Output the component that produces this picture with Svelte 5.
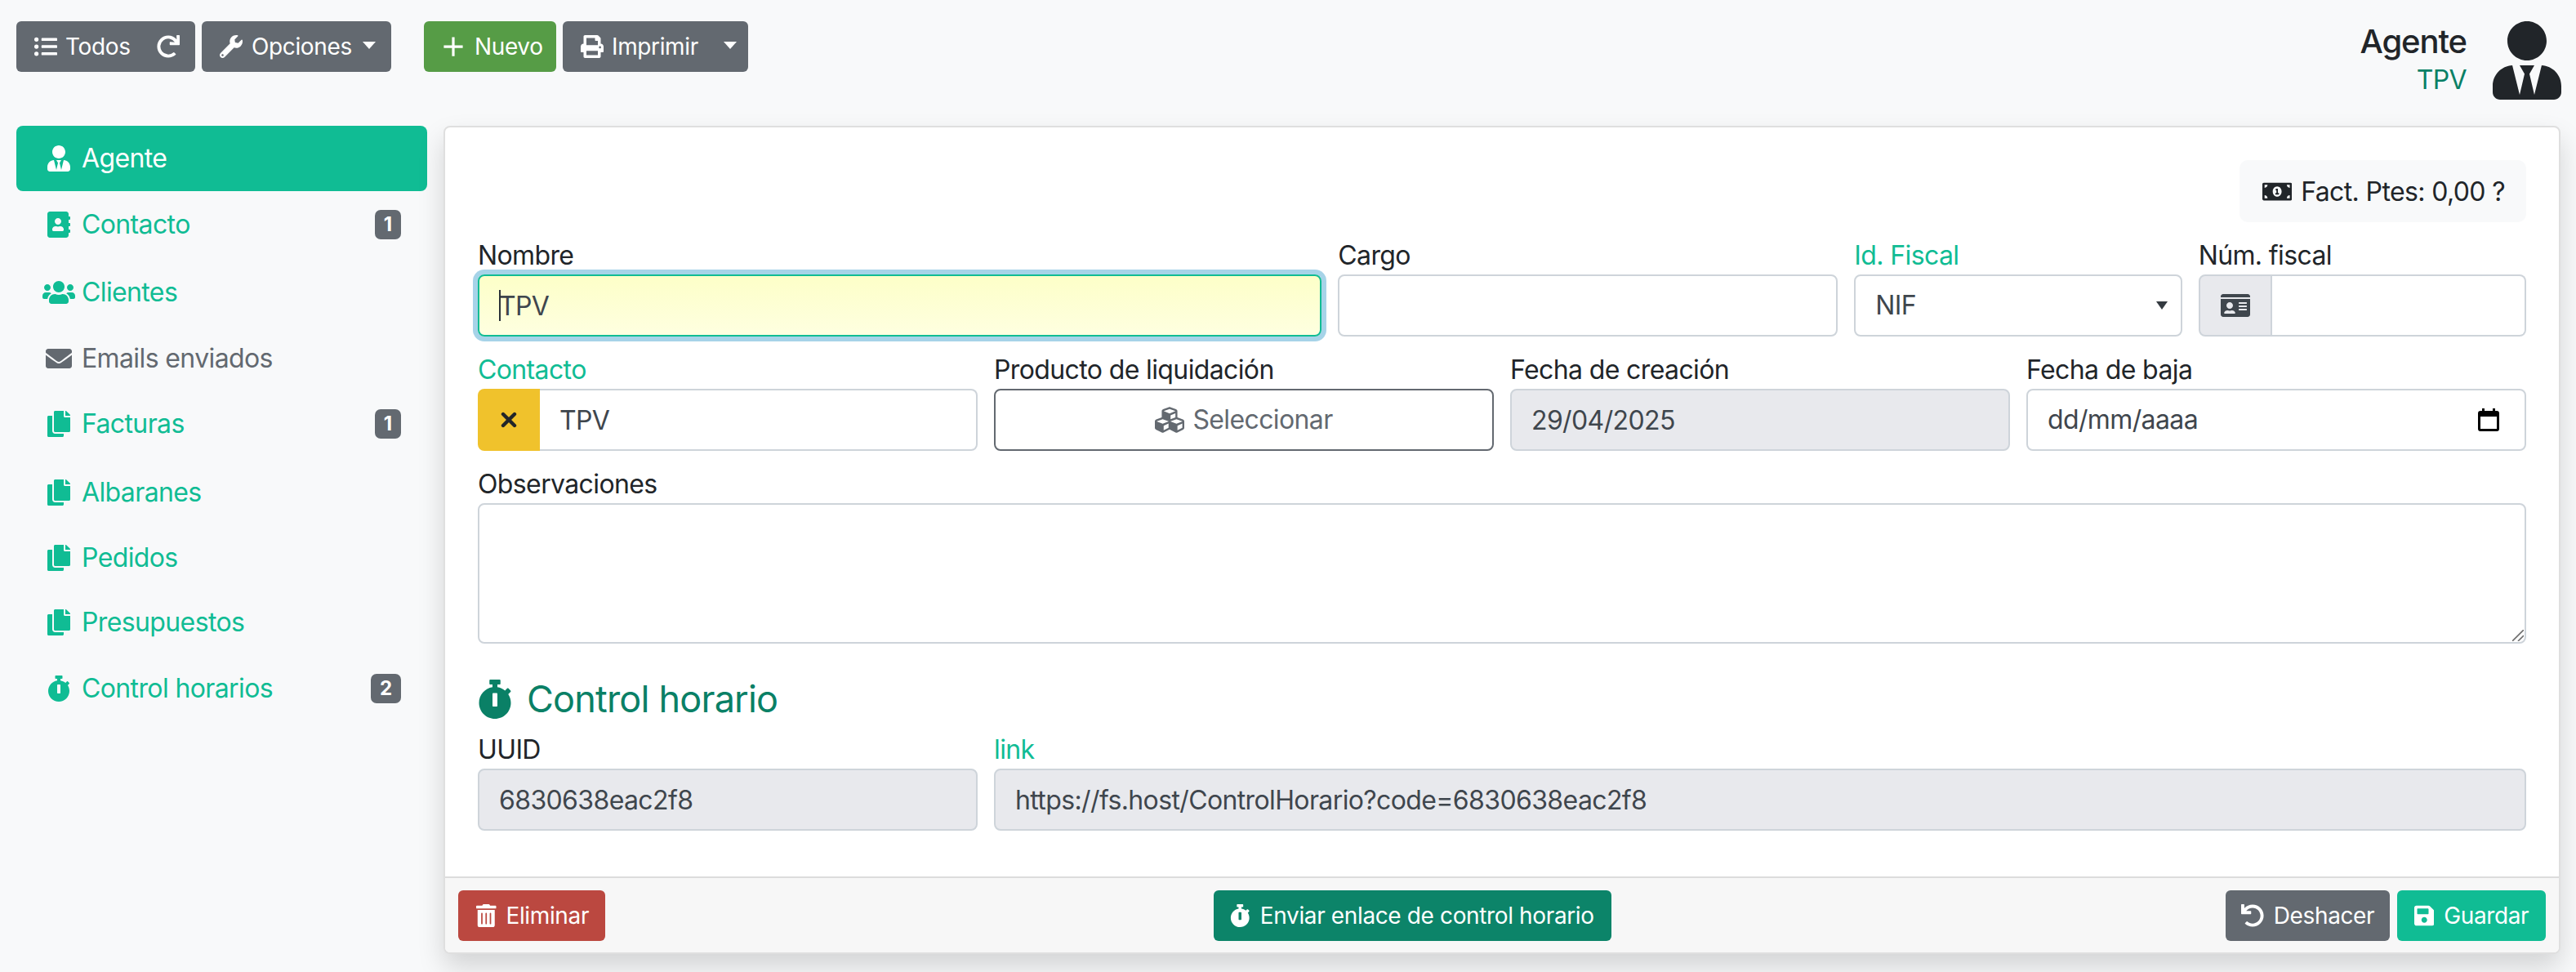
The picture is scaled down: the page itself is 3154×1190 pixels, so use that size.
<script lang="ts">
  const icons = {
    list: { vb: '0 0 512 512', d: 'M48 48a48 48 0 1 0 48 48 48 48 0 0 0-48-48zm0 160a48 48 0 1 0 48 48 48 48 0 0 0-48-48zm0 160a48 48 0 1 0 48 48 48 48 0 0 0-48-48zm448 16H176a16 16 0 0 0-16 16v32a16 16 0 0 0 16 16h320a16 16 0 0 0 16-16v-32a16 16 0 0 0-16-16zm0-320H176a16 16 0 0 0-16 16v32a16 16 0 0 0 16 16h320a16 16 0 0 0 16-16V80a16 16 0 0 0-16-16zm0 160H176a16 16 0 0 0-16 16v32a16 16 0 0 0 16 16h320a16 16 0 0 0 16-16v-32a16 16 0 0 0-16-16z' },
    redo: { vb: '0 0 512 512', d: 'M500.33 0h-47.41a12 12 0 0 0-12 12.57l4 82.76A247.42 247.42 0 0 0 256 8C119.34 8 8.9 119.53 8 256.19 7.1 393.07 118.1 504 256 504a247.1 247.1 0 0 0 166.18-63.91 12 12 0 0 0 .48-17.43l-34-34a12 12 0 0 0-16.38-.55A176 176 0 1 1 402.1 157.8l-101.53-4.87a12 12 0 0 0-12.57 12v47.41a12 12 0 0 0 12 12h200.33a12 12 0 0 0 12-12V12a12 12 0 0 0-12-12z' },
    undo: { vb: '0 0 512 512', d: 'M212.333 224.333H12c-6.627 0-12-5.373-12-12V12C0 5.373 5.373 0 12 0h48c6.627 0 12 5.373 12 12v78.112C117.773 39.279 184.26 7.47 258.175 8.007c136.906.994 246.448 111.623 246.157 248.532C504.041 393.258 393.12 504 256.333 504c-64.089 0-122.496-24.313-166.51-64.215-5.099-4.622-5.334-12.554-.467-17.42l33.967-33.967c4.474-4.474 11.662-4.717 16.401-.525C170.76 415.336 211.58 432 256.333 432c97.268 0 176-78.716 176-176 0-97.267-78.716-176-176-176-58.496 0-110.28 28.476-142.274 72.333h98.274c6.627 0 12 5.373 12 12v48c0 6.627-5.373 12-12 12z' },
    wrench: { vb: '0 0 512 512', d: 'M507.73 109.1c-2.24-9.03-13.54-12.09-20.12-5.51l-74.36 74.36-67.88-11.31-11.31-67.88 74.36-74.36c6.62-6.62 3.43-17.9-5.66-20.16-47.38-11.74-99.55.91-136.58 37.93-39.64 39.64-50.55 97.1-34.05 147.2L18.74 402.76c-24.99 24.99-24.99 65.51 0 90.5 24.99 24.99 65.51 24.99 90.5 0l213.21-213.21c50.12 16.71 107.47 5.68 147.37-34.22 37.07-37.07 49.7-89.32 37.91-136.73zM64 472c-13.25 0-24-10.75-24-24 0-13.26 10.75-24 24-24s24 10.74 24 24c0 13.25-10.75 24-24 24z' },
    plus: { vb: '0 0 24 28', d: 'M10.4 2.5h3.2v10h10v3.2h-10v10h-3.2v-10h-10v-3.2h10z' },
    print: { vb: '0 0 512 512', d: 'M448 192V77.25c0-8.49-3.37-16.62-9.37-22.63L393.37 9.37c-6-6-14.14-9.37-22.63-9.37H96C78.33 0 64 14.33 64 32v160c-35.35 0-64 28.65-64 64v112c0 8.84 7.16 16 16 16h48v96c0 17.67 14.33 32 32 32h320c17.67 0 32-14.33 32-32v-96h48c8.84 0 16-7.16 16-16V256c0-35.35-28.65-64-64-64zm-64 256H128v-96h256v96zm0-224H128V64h192v48c0 8.84 7.16 16 16 16h48v96zm48 72c-13.25 0-24-10.75-24-24 0-13.27 10.75-24 24-24s24 10.73 24 24c0 13.25-10.75 24-24 24z' },
    userTie: { vb: '0 0 448 512', d: 'M224 256c70.7 0 128-57.3 128-128S294.7 0 224 0 96 57.3 96 128s57.3 128 128 128zm95.8 32.6L272 480l-32-136 32-56h-96l32 56-32 136-47.8-191.4C56.9 292 0 350.3 0 422.4V464c0 26.5 21.5 48 48 48h352c26.5 0 48-21.5 48-48v-41.6c0-72.1-56.9-130.4-128.2-133.8z' },
    book: { vb: '0 0 448 512', d: 'M436 160c6.6 0 12-5.4 12-12v-40c0-6.6-5.4-12-12-12h-20V48c0-26.5-21.5-48-48-48H48C21.5 0 0 21.5 0 48v416c0 26.5 21.5 48 48 48h320c26.5 0 48-21.5 48-48v-48h20c6.6 0 12-5.4 12-12v-40c0-6.6-5.4-12-12-12h-20v-64h20c6.6 0 12-5.4 12-12v-40c0-6.6-5.4-12-12-12h-20v-64h20zm-228-32c35.3 0 64 28.7 64 64s-28.7 64-64 64-64-28.7-64-64 28.7-64 64-64zm112 236.8c0 10.6-10 19.2-22.4 19.2H118.4C106 384 96 375.4 96 364.8v-19.2c0-31.8 30.1-57.6 67.2-57.6h5c12.3 5.1 25.7 8 39.8 8s27.6-2.9 39.8-8h5c37.1 0 67.2 25.8 67.2 57.6v19.2z' },
    users: { vb: '0 0 640 512', d: 'M96 224c35.3 0 64-28.7 64-64s-28.7-64-64-64-64 28.7-64 64 28.7 64 64 64zm448 0c35.3 0 64-28.7 64-64s-28.7-64-64-64-64 28.7-64 64 28.7 64 64 64zm32 32h-64c-17.6 0-33.5 7.1-45.1 18.6 40.3 22.1 68.9 62 75.1 109.4h66c17.7 0 32-14.3 32-32v-32c0-35.3-28.7-64-64-64zm-256 0c61.9 0 112-50.1 112-112S381.9 32 320 32 208 82.1 208 144s50.1 112 112 112zm76.8 32h-8.3c-20.8 10-43.9 16-68.5 16s-47.6-6-68.5-16h-8.3C179.6 288 128 339.6 128 403.2V432c0 26.5 21.5 48 48 48h288c26.5 0 48-21.5 48-48v-28.8c0-63.6-51.6-115.2-115.2-115.2zm-223.7-13.4C161.5 263.1 145.6 256 128 256H64c-35.3 0-64 28.7-64 64v32c0 17.7 14.3 32 32 32h65.9c6.3-47.4 34.9-87.3 75.2-109.4z' },
    envelope: { vb: '0 0 512 512', d: 'M502.3 190.8c3.9-3.1 9.7-.2 9.7 4.7V400c0 26.5-21.5 48-48 48H48c-26.5 0-48-21.5-48-48V195.6c0-5 5.7-7.8 9.7-4.7 22.4 17.4 52.1 39.5 154.1 113.6 21.1 15.4 56.7 47.8 92.2 47.6 35.7.3 72-32.8 92.3-47.6 102-74.1 131.6-96.3 154-113.7zM256 320c23.2.4 56.6-29.2 73.4-41.4 132.7-96.3 142.8-104.7 173.4-128.7 5.8-4.5 9.2-11.5 9.2-18.9v-19c0-26.5-21.5-48-48-48H48C21.5 64 0 85.5 0 112v19c0 7.4 3.4 14.3 9.2 18.9 30.6 23.9 40.7 32.4 173.4 128.7 16.8 12.2 50.2 41.8 73.4 41.4z' },
    copy: { vb: '0 0 448 512', d: 'M320 448v40c0 13.255-10.745 24-24 24H24c-13.255 0-24-10.745-24-24V120c0-13.255 10.745-24 24-24h72v296c0 30.879 25.121 56 56 56h168zm0-344V0H152c-13.255 0-24 10.745-24 24v368c0 13.255 10.745 24 24 24h272c13.255 0 24-10.745 24-24V128H344c-13.2 0-24-10.8-24-24zm120.971-31.029L375.029 7.029A24 24 0 0 0 358.059 0H352v96h96v-6.059a24 24 0 0 0-7.029-16.97z' },
    stopwatch: { vb: '0 0 448 512', d: 'M432 304c0 114.9-93.1 208-208 208S16 418.9 16 304c0-104 76.3-190.2 176-205.5V64h-28c-6.6 0-12-5.4-12-12V12c0-6.6 5.4-12 12-12h120c6.6 0 12 5.4 12 12v40c0 6.6-5.4 12-12 12h-28v34.5c37.5 5.8 71.7 21.6 99.7 44.6l27.5-27.5c4.7-4.7 12.3-4.7 17 0l28.3 28.3c4.7 4.7 4.7 12.3 0 17l-29.4 29.4-.6.6C419.7 223.3 432 262.2 432 304zm-176 36V188.5c0-6.6-5.4-12-12-12h-40c-6.6 0-12 5.4-12 12V340c0 6.6 5.4 12 12 12h40c6.6 0 12-5.4 12-12z' },
    money: { vb: '0 0 640 512', d: 'M352 288h-16v-88c0-4.42-3.58-8-8-8h-13.58c-4.74 0-9.37 1.4-13.31 4.03l-15.33 10.22a7.994 7.994 0 0 0-2.22 11.09l8.88 13.31a7.994 7.994 0 0 0 11.09 2.22l.47-.31V288h-16c-4.42 0-8 3.58-8 8v16c0 4.42 3.58 8 8 8h64c4.42 0 8-3.58 8-8v-16c0-4.42-3.58-8-8-8zM608 64H32C14.33 64 0 78.33 0 96v320c0 17.67 14.33 32 32 32h576c17.67 0 32-14.33 32-32V96c0-17.67-14.33-32-32-32zM48 400v-64c35.35 0 64 28.65 64 64H48zm0-224v-64h64c0 35.35-28.65 64-64 64zm272 192c-53.02 0-96-50.14-96-112 0-61.85 42.98-112 96-112s96 50.15 96 112c0 61.88-43 112-96 112zm272 32h-64c0-35.35 28.65-64 64-64v64zm0-224c-35.35 0-64-28.65-64-64h64v64z' },
    idCard: { vb: '0 0 576 512', d: 'M528 32H48C21.5 32 0 53.5 0 80v16h576V80c0-26.5-21.5-48-48-48zM0 432c0 26.5 21.5 48 48 48h480c26.5 0 48-21.5 48-48V128H0v304zm352-232c0-4.4 3.6-8 8-8h144c4.4 0 8 3.6 8 8v16c0 4.4-3.6 8-8 8H360c-4.4 0-8-3.6-8-8v-16zm0 64c0-4.4 3.6-8 8-8h144c4.4 0 8 3.6 8 8v16c0 4.4-3.6 8-8 8H360c-4.4 0-8-3.6-8-8v-16zm0 64c0-4.4 3.6-8 8-8h144c4.4 0 8 3.6 8 8v16c0 4.4-3.6 8-8 8H360c-4.4 0-8-3.6-8-8v-16zM176 192c35.3 0 64 28.7 64 64s-28.7 64-64 64-64-28.7-64-64 28.7-64 64-64zM67.1 396.2C75.5 370.5 99.6 352 128 352h8.2c12.3 5.1 25.7 8 39.8 8s27.6-2.9 39.8-8h8.2c28.4 0 52.5 18.5 60.9 44.2 3.2 9.9-5.2 19.8-15.6 19.8H82.7c-10.4 0-18.8-10-15.6-19.8z' },
    cubes: { vb: '0 0 512 512', d: 'M488.6 250.2L392 214V105.5c0-15-9.3-28.4-23.4-33.7l-100-37.5c-8.1-3.1-17.1-3.1-25.3 0l-100 37.5c-14.1 5.3-23.4 18.7-23.4 33.7V214l-96.6 36.2C9.3 255.5 0 268.9 0 283.9V394c0 13.6 7.7 26.1 19.9 32.2l100 50c10.1 5.1 22.1 5.1 32.2 0l103.9-52 103.9 52c10.1 5.1 22.1 5.1 32.2 0l100-50c12.2-6.1 19.9-18.6 19.9-32.2V283.9c0-15-9.3-28.4-23.4-33.7zM358 214.8l-85 31.9v-68.2l85-37v73.3zM154 104.1l102-38.2 102 38.2v.6l-102 41.4-102-41.4v-.6zm84 291.1l-85 42.5v-79.1l85-38.8v75.4zm0-112l-102 41.4-102-41.4v-.6l102-38.2 102 38.2v.6zm240 112l-85 42.5v-79.1l85-38.8v75.4zm0-112l-102 41.4-102-41.4v-.6l102-38.2 102 38.2v.6z' },
    trash: { vb: '0 0 448 512', d: 'M32 464a48 48 0 0 0 48 48h288a48 48 0 0 0 48-48V128H32zm272-256a16 16 0 0 1 32 0v224a16 16 0 0 1-32 0zm-96 0a16 16 0 0 1 32 0v224a16 16 0 0 1-32 0zm-96 0a16 16 0 0 1 32 0v224a16 16 0 0 1-32 0zM432 32H312l-9.4-18.7A24 24 0 0 0 281.1 0H166.8a23.72 23.72 0 0 0-21.4 13.3L136 32H16A16 16 0 0 0 0 48v32a16 16 0 0 0 16 16h416a16 16 0 0 0 16-16V48a16 16 0 0 0-16-16z' },
    save: { vb: '0 0 448 512', d: 'M433.941 129.941l-83.882-83.882A48 48 0 0 0 316.118 32H48C21.49 32 0 53.49 0 80v352c0 26.51 21.49 48 48 48h352c26.51 0 48-21.49 48-48V163.882a48 48 0 0 0-14.059-33.941zM224 416c-35.346 0-64-28.654-64-64 0-35.346 28.654-64 64-64s64 28.654 64 64c0 35.346-28.654 64-64 64zm96-304.52V212c0 6.627-5.373 12-12 12H76c-6.627 0-12-5.373-12-12V108c0-6.627 5.373-12 12-12h228.52c3.183 0 6.235 1.264 8.485 3.515l3.48 3.48A11.996 11.996 0 0 1 320 111.48z' }
  }

  const menu = [
    { label: 'Agente', icon: icons.userTie, active: true, h: 80 },
    { label: 'Contacto', icon: icons.book, badge: 1, h: 82 },
    { label: 'Clientes', icon: icons.users, h: 84 },
    { label: 'Emails enviados', icon: icons.envelope, muted: true, h: 78 },
    { label: 'Facturas', icon: icons.copy, badge: 1, h: 82 },
    { label: 'Albaranes', icon: icons.copy, h: 86 },
    { label: 'Pedidos', icon: icons.copy, h: 74 },
    { label: 'Presupuestos', icon: icons.copy, h: 84 },
    { label: 'Control horarios', icon: icons.stopwatch, badge: 2, h: 78 }
  ]
</script>

{#snippet icon(i, cls = '')}
  <svg class="ico {cls}" viewBox={i.vb} aria-hidden="true"><path fill="currentColor" d={i.d} /></svg>
{/snippet}

<div class="page">
  <header class="topbar">
    <div class="tools">
      <div class="btn gray todos">
        {@render icon(icons.list)}
        <span>Todos</span>
        <span class="spacer"></span>
        {@render icon(icons.redo)}
      </div>
      <div class="btn gray opciones">
        {@render icon(icons.wrench)}
        <span>Opciones</span>
        <i class="caret"></i>
      </div>
      <div class="btn green nuevo">
        {@render icon(icons.plus)}
        <span>Nuevo</span>
      </div>
      <div class="btn gray imprimir">
        {@render icon(icons.print)}
        <span>Imprimir</span>
        <i class="caret"></i>
      </div>
    </div>
    <div class="title">
      <div class="title-text">
        <div class="title-main">Agente</div>
        <div class="title-sub">TPV</div>
      </div>
      {@render icon(icons.userTie, 'avatar')}
    </div>
  </header>

  <div class="body">
    <nav class="side">
      {#each menu as m}
        <div class="item" class:active={m.active} class:muted={m.muted} style="height: {m.h}px">
          <span class="item-ico">{@render icon(m.icon)}</span>
          <span>{m.label}</span>
          {#if m.badge}<span class="badge">{m.badge}</span>{/if}
        </div>
      {/each}
    </nav>

    <main class="card">
      <div class="card-body">
        <div class="pending-row">
          <div class="pending">
            {@render icon(icons.money)}
            <span>Fact. Ptes: 0,00 ?</span>
          </div>
        </div>

        <div class="row">
          <div class="field c5">
            <label for="nombre">Nombre</label>
            <div class="focus-wrap">
              <input id="nombre" class="control focused" value="TPV" />
              <span class="text-caret"></span>
            </div>
          </div>
          <div class="field c3">
            <label for="cargo">Cargo</label>
            <input id="cargo" class="control" />
          </div>
          <div class="field c2">
            <span class="lab link">Id. Fiscal</span>
            <div class="control select">
              <span>NIF</span>
              <i class="caret dark"></i>
            </div>
          </div>
          <div class="field c2">
            <label for="num">Núm. fiscal</label>
            <div class="group">
              <span class="addon">{@render icon(icons.idCard)}</span>
              <input id="num" class="control joined" />
            </div>
          </div>
        </div>

        <div class="row">
          <div class="field c3">
            <span class="lab link">Contacto</span>
            <div class="group">
              <span class="addon warn">
                <svg class="times" viewBox="0 0 20 20" aria-hidden="true">
                  <path d="M3 3l14 14M17 3L3 17" fill="none" stroke="currentColor" stroke-width="4.4" stroke-linecap="round" />
                </svg>
              </span>
              <input class="control joined" value="TPV" />
            </div>
          </div>
          <div class="field c3">
            <span class="lab">Producto de liquidación</span>
            <div class="outline">
              {@render icon(icons.cubes)}
              <span>Seleccionar</span>
            </div>
          </div>
          <div class="field c3">
            <label for="alta">Fecha de creación</label>
            <input id="alta" class="control" disabled value="29/04/2025" />
          </div>
          <div class="field c3">
            <span class="lab">Fecha de baja</span>
            <div class="control date">
              <span>dd/mm/aaaa</span>
              <svg class="cal" viewBox="0 0 26 28" aria-hidden="true">
                <path fill="#000" fill-rule="evenodd" d="M5 0h3v3h10V0h3v3h2a3 3 0 0 1 3 3v19a3 3 0 0 1-3 3H3a3 3 0 0 1-3-3V6a3 3 0 0 1 3-3h2V0zM3 10v15h20V10H3z" />
              </svg>
            </div>
          </div>
        </div>

        <div class="row">
          <div class="field c12">
            <label for="obs">Observaciones</label>
            <div class="area-wrap">
              <textarea id="obs" class="control area"></textarea>
              <svg class="grip" viewBox="0 0 14 14" aria-hidden="true">
                <path d="M0 14L14 0M7 14l7-7" fill="none" stroke="#6e6e6e" stroke-width="1.6" />
              </svg>
            </div>
          </div>
        </div>

        <h4 class="section">
          {@render icon(icons.stopwatch)}
          <span>Control horario</span>
        </h4>

        <div class="row">
          <div class="field c3">
            <label for="uuid">UUID</label>
            <input id="uuid" class="control" disabled value="6830638eac2f8" />
          </div>
          <div class="field c9">
            <span class="lab link">link</span>
            <input class="control" disabled value="https://fs.host/ControlHorario?code=6830638eac2f8" />
          </div>
        </div>
      </div>

      <footer class="card-foot">
        <div class="btn red eliminar">
          {@render icon(icons.trash)}
          <span>Eliminar</span>
        </div>
        <div class="btn teal enviar">
          {@render icon(icons.stopwatch)}
          <span>Enviar enlace de control horario</span>
        </div>
        <div class="foot-right">
          <div class="btn gray deshacer">
            {@render icon(icons.undo)}
            <span>Deshacer</span>
          </div>
          <div class="btn mint guardar">
            {@render icon(icons.save)}
            <span>Guardar</span>
          </div>
        </div>
      </footer>
    </main>
  </div>
</div>

<style>
  :global(body) {
    margin: 0;
    background: #f8f9fa;
    font-family: Inter, "Liberation Sans", sans-serif;
    color: #212529;
    font-size: 32px;
    line-height: 48px;
    letter-spacing: -0.62px;
  }
  .page {
    padding: 26px 20px 0;
    box-sizing: border-box;
    min-height: 1190px;
  }
  .ico {
    height: 28px;
    width: auto;
    display: block;
    flex: none;
  }

  .topbar {
    display: flex;
    justify-content: space-between;
    align-items: flex-start;
    height: 128px;
  }
  .tools {
    display: flex;
    gap: 8px;
  }
  .btn {
    display: flex;
    align-items: center;
    gap: 12px;
    height: 62px;
    box-sizing: border-box;
    padding: 0 20px 0 22px;
    border-radius: 6px;
    color: #fff;
    font-size: 28px;
    line-height: 42px;
    letter-spacing: -0.37px;
    white-space: nowrap;
  }
  .gray { background: #636970; }
  .green { background: #569c46; }
  .red { background: #bb4840; }
  .teal { background: #0c8469; }
  .mint { background: #10bc94; }
  .spacer { flex: 1; }
  .todos { width: 219px; padding-right: 19px; gap: 10px; }
  .opciones { width: 232px; padding-right: 19px; gap: 11px; }
  .nuevo { width: 162px; margin-left: 32px; padding-left: 24px; gap: 14px; }
  .imprimir { width: 227px; padding-right: 14px; gap: 10px; }
  .eliminar { width: 180px; }
  .enviar { width: 487px; justify-content: center; padding: 0; margin-right: 8px; }
  .deshacer { width: 201px; justify-content: center; padding: 0; }
  .guardar { width: 182px; justify-content: center; padding: 0; }
  .caret {
    display: block;
    flex: none;
    width: 0;
    height: 0;
    margin-left: auto;
    border-left: 8px solid transparent;
    border-right: 8px solid transparent;
    border-top: 9px solid currentColor;
    margin-top: -4px;
  }
  .caret.dark {
    color: #343a40;
    border-left-width: 7px;
    border-right-width: 7px;
    border-top-width: 10px;
    margin: 0;
  }

  .title {
    display: flex;
    align-items: flex-start;
    gap: 32px;
    margin-right: -2px;
  }
  .title-text {
    text-align: right;
  }
  .title-main {
    font-size: 40px;
    font-weight: 500;
    line-height: 46px;
    margin-top: 2px;
    letter-spacing: -1.1px;
  }
  .title-sub {
    color: #0a8066;
    font-size: 32px;
    line-height: 48px;
  }
  .ico.avatar {
    height: 96px;
  }

  .body {
    display: grid;
    grid-template-columns: 503px 1fr;
    gap: 20px;
  }
  .side {
    display: flex;
    flex-direction: column;
  }
  .item {
    display: flex;
    align-items: center;
    padding: 0 32px;
    color: #10bc94;
    border-radius: 8px;
  }
  .item.active {
    background: #10bc94;
    color: #fff;
  }
  .item.muted {
    color: #636970;
  }
  .item-ico {
    width: 40px;
    margin-right: 8px;
    display: flex;
    justify-content: center;
  }
  .item-ico .ico {
    height: 32px;
  }
  .badge {
    margin-left: auto;
    background: #636970;
    color: #fff;
    font-size: 24px;
    font-weight: 700;
    line-height: 36px;
    padding: 0 11px;
    border-radius: 7px;
    letter-spacing: 0;
  }

  .card {
    background: #fff;
    border: 2px solid #dfdfdf;
    border-radius: 8px;
    box-shadow: 0 16px 32px rgba(0, 0, 0, 0.15);
    height: 1014px;
    box-sizing: border-box;
    margin-right: -1px;
    display: flex;
    flex-direction: column;
    overflow: hidden;
  }
  .card-body {
    flex: 1;
    padding: 40px 40px 0;
  }
  .pending-row {
    display: flex;
    justify-content: flex-end;
  }
  .pending {
    display: flex;
    align-items: center;
    gap: 11px;
    box-sizing: border-box;
    height: 76px;
    padding: 2px 26px 0 28px;
    background: #f8f9fa;
    border-radius: 10px;
  }
  .pending .ico {
    height: 29px;
    margin-top: -2px;
  }

  .row {
    display: grid;
    grid-template-columns: repeat(12, 1fr);
    gap: 20px;
    margin-top: 16px;
  }
  .c2 { grid-column: span 2; }
  .c3 { grid-column: span 3; }
  .c5 { grid-column: span 5; }
  .c9 { grid-column: span 9; }
  .c12 { grid-column: span 12; }
  .field {
    min-width: 0;
    display: flex;
    flex-direction: column;
  }
  label, .lab {
    display: block;
    height: 48px;
    line-height: 50px;
  }
  .link {
    color: #10bc94;
  }
  .control {
    box-sizing: border-box;
    width: 100%;
    height: 76px;
    padding: 0 24px;
    border: 2px solid #ced4da;
    border-radius: 8px;
    background: #fff;
    color: #3f464d;
    font: 400 32px/48px Inter, "Liberation Sans", sans-serif;
    letter-spacing: -0.62px;
    outline: none;
    margin: 0;
  }
  .control:disabled {
    background: #e8e9ed;
    opacity: 1;
    color: #3f464d;
    -webkit-text-fill-color: #3f464d;
  }
  .focus-wrap {
    position: relative;
  }
  .control.focused {
    border-color: #10bc94;
    background: linear-gradient(#fdffc8, #feffe0);
    box-shadow: 0 0 0 6px #a6d3e8;
  }
  .text-caret {
    position: absolute;
    left: 26px;
    top: 19px;
    width: 2px;
    height: 38px;
    background: #2b3238;
  }
  .select, .date {
    display: flex;
    align-items: center;
    justify-content: space-between;
  }
  .select {
    padding-right: 16px;
  }
  .date {
    padding-right: 31px;
  }
  .cal {
    width: 26px;
    height: 28px;
    flex: none;
  }
  .group {
    display: flex;
    height: 76px;
  }
  .addon {
    box-sizing: border-box;
    flex: none;
    width: 90px;
    display: flex;
    align-items: center;
    justify-content: center;
    background: #e8e9ed;
    border: 2px solid #ced4da;
    border-radius: 8px 0 0 8px;
    color: #3f464d;
  }
  .addon .ico {
    height: 32px;
  }
  .addon.warn {
    width: 76px;
    background: #f0c22c;
    border: 0;
    color: #212529;
  }
  .times {
    width: 20px;
    height: 20px;
  }
  .control.joined {
    flex: 1;
    min-width: 0;
    border-left: 0;
    border-radius: 0 8px 8px 0;
  }
  .outline {
    box-sizing: border-box;
    height: 76px;
    display: flex;
    align-items: center;
    justify-content: center;
    gap: 10px;
    border: 2px solid #636970;
    border-radius: 8px;
    color: #636970;
  }
  .outline .ico {
    height: 36px;
  }
  .area-wrap {
    position: relative;
  }
  .area {
    height: 172px;
    resize: none;
    padding: 12px 24px;
    display: block;
  }
  .grip {
    position: absolute;
    right: 3px;
    bottom: 3px;
    width: 14px;
    height: 14px;
  }
  .section {
    display: flex;
    align-items: center;
    gap: 18px;
    margin: 36px 0 0;
    height: 64px;
    color: #0a8066;
    font-size: 45px;
    font-weight: 400;
    line-height: 64px;
    letter-spacing: -0.8px;
  }
  .section .ico {
    height: 48px;
  }
  .section + .row {
    margin-top: 5px;
  }

  .card-foot {
    height: 93px;
    box-sizing: border-box;
    background: #f7f7f7;
    border-top: 2px solid #dcdcdc;
    padding: 15px 16px 0;
    display: flex;
    justify-content: space-between;
    align-items: flex-start;
  }
  .foot-right {
    display: flex;
    gap: 9px;
  }
</style>
